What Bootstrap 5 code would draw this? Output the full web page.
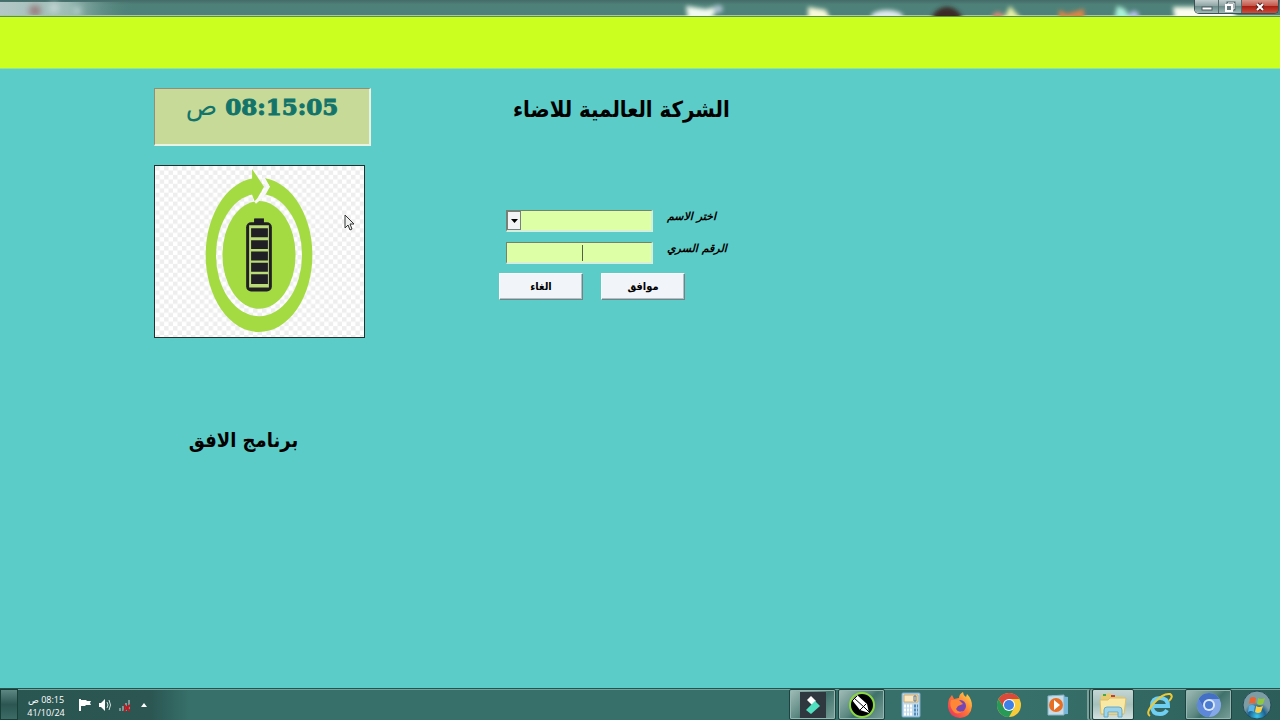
<!DOCTYPE html>
<html lang="ar" dir="ltr">
<head>
<meta charset="utf-8">
<meta name="viewport" content="width=device-width, initial-scale=1">
<title>برنامج الافق</title>
<link href="https://cdn.jsdelivr.net/npm/bootstrap@5.3.0/dist/css/bootstrap.min.css" rel="stylesheet">
<script src="https://cdn.jsdelivr.net/npm/bootstrap@5.3.0/dist/js/bootstrap.bundle.min.js"></script>
<style>
body{background:#5bccc8;font-family:"DejaVu Sans","Liberation Sans",sans-serif;color:#000}
.title-strip{height:17px;background:linear-gradient(#456a68,#4e8279 30%,#4e8079);border-bottom:1px solid #5b8f4c;box-shadow:inset 0 -1px #a9c7a0;overflow:hidden}
.win-controls{height:14px;width:85px;top:0;right:1px;border:1px solid #3c4f52;border-top:0;border-radius:0 0 5px 5px;overflow:hidden}
.win-controls button{width:23px;border:0;padding:0;background:linear-gradient(#c3cfcf,#8fa5a5 45%,#6d8c8a 50%,#9eb9b5);line-height:0}
.win-controls button+button{border-left:1px solid #54696a}
.win-controls .win-x{background:linear-gradient(#d9958a,#c4564a 45%,#a91f14 50%,#cf4d3c)}
.band{height:52px;background:#cbff1f;border-bottom:1px solid #8ee88a}
.workspace{padding:19px 16px 19px 154px;column-gap:128px}
.side{width:217px}
.clock{height:58px;background:#c7da98;border:solid;border-width:1px 2px 2px 1px;border-color:#8d907c #e9f3e4 #e9f3e4 #8d907c;color:#12746a;font-size:26px;line-height:34px}
.clock b{font-family:"DejaVu Serif","Liberation Serif",serif;font-size:23px;font-weight:700;-webkit-text-stroke:1px #12746a}
.logo-box{width:211px;height:173px;border:1px solid #23302f;margin-top:19px;background:#fff}
.pointer{left:189px;top:48px}
.product,.company,.btn-classic{font-family:"DejaVu Sans Condensed","DejaVu Sans",sans-serif}
.product{font-size:20px;line-height:28px;margin:88px 0 0;width:179px}
.company{font-size:22px;line-height:32px;margin:6px 0 0;padding-left:14px}
.login{margin-top:84px}
.field-line{padding-left:7px;column-gap:14px;height:22px;margin-bottom:10px}
.field{width:147px;height:22px;background:#ddffa6;border:solid;border-width:1px 2px 2px 1px;border-color:#76826d #d4f0dc #d4f0dc #76826d;border-radius:0;padding:0;outline:0;font-size:12px}
.combo select{appearance:none;padding-left:18px}
.combo .drop{left:1px;top:1px;width:14px;height:19px;background:#f1f3f5;border:1px solid #777f81;pointer-events:none}
.field-line label{font-size:11px;line-height:16px;font-weight:700;font-style:italic;margin-bottom:8px}
.caret{left:76px;top:3px;width:1px;height:16px;background:#536142}
.actions{column-gap:18px;margin-top:-1px}
.btn-classic{width:84px;height:27px;padding:0;background:#f1f5fa;border:1px solid;border-color:#fff #6d8586 #6d8586 #fff;border-radius:0;box-shadow:inset -1px -1px #b3bfc4;font-size:11px;font-weight:700;line-height:20px;color:#000}
.btn-classic:hover{background:#fff}
.taskbar{height:32px;background:linear-gradient(90deg,#2a5652,#2b5652 150px,#37706a 190px,#37706a 80%,#2c5d59);border-top:1px solid #27514d;box-shadow:inset 0 1px #6fa69f}
.peek{width:18px;border:1px solid #183e3a;background:linear-gradient(#5c8782,#2b5652 50%,#3d6b66)}
.tray-time{width:56px;color:#fff;font:9px/13px "Open Sans","DejaVu Sans",sans-serif}
.tray-icons{column-gap:6px}
.tray-icons button,.task{border:0;background:none;padding:0;line-height:0}
.task{width:47px}
.task.open{border:1px solid #1d423f;border-radius:2px;background:linear-gradient(135deg,#a2bdb8,#5b8781 45%,#40716b 55%,#7ba09a);box-shadow:inset 0 0 0 1px #94b7b1}
.task.lit{width:42px;margin-left:9px;background:linear-gradient(#c5d6d3,#a6c0bc 50%,#d4e1df);box-shadow:-2px 0 #7ba09a,-3px 0 #1d423f,-5px 0 #7ba09a}
.apps{column-gap:2px}
.start{width:46px}
</style>
</head>
<body class="d-flex flex-column min-vh-100">
<header>
  <div class="title-strip position-relative d-flex justify-content-between">
    <svg width="140" height="15" aria-hidden="true"><defs><filter id="soft" x="-30%" y="-80%" width="160%" height="260%"><feGaussianBlur stdDeviation="3"/></filter><linearGradient id="haze"><stop offset="0" stop-color="#b3c8c6"/><stop offset=".5" stop-color="#9dbcb6"/><stop offset="1" stop-color="#4e8079" stop-opacity="0"/></linearGradient></defs><path fill="url(#haze)" d="M0 2h135v13H0z"/><g filter="url(#soft)"><circle cx="35" cy="11" r="6" fill="#987d7e"/><circle cx="54" cy="8" r="5" fill="#c5d7d4"/><circle cx="77" cy="11" r="4" fill="#bcd4cf"/></g></svg>
    <svg width="620" height="16" aria-hidden="true"><defs><filter id="soft2" x="-10%" y="-50%" width="120%" height="200%"><feGaussianBlur stdDeviation="2"/></filter></defs><g filter="url(#soft2)"><path fill="#f1faf0" d="M26 6l20 3 12-3-2 6-6 8H28z"/><ellipse cx="58" cy="9" rx="5" ry="4" fill="#a9c0cc"/><path fill="#f8fada" d="M148 7l18 3 5 11h-23z"/><ellipse cx="227" cy="17" rx="16" ry="7" fill="#e0ebef"/><circle cx="287" cy="23" r="16" fill="#3a2925"/><path fill="#e6f0a7" d="M350 6l14 16h-22z"/><circle cx="338" cy="18" r="6" fill="#d38c79"/><path fill="#dc8646" d="M399 19V10l8 4 17-5v12z"/><path fill="#abf0d9" d="M457 6l8 3 7 12h-18z"/><circle cx="474" cy="16" r="5" fill="#b7c4ec"/><path fill="#fbfdf0" d="M513 7h62v14h-60z"/></g></svg>
    <div class="win-controls position-absolute d-flex" role="group">
      <button type="button" aria-label="تصغير"><svg width="14" height="12"><rect x="2" y="6" width="10" height="3" fill="#fff" stroke="#4c5c60"/></svg></button>
      <button type="button" aria-label="استعادة"><svg width="14" height="12"><path d="M5 2h6v6H5z" fill="none" stroke="#52666a" stroke-width="3"/><path d="M5 2h6v6H5z" fill="none" stroke="#fff"/><rect x="3" y="4" width="6" height="6" fill="#647a7d" stroke="#fff" stroke-width="2"/></svg></button>
      <button type="button" class="win-x flex-grow-1" aria-label="اغلاق"><svg width="14" height="12"><path d="M4 3l6 6M10 3l-6 6" stroke="#5c2521" stroke-width="4"/><path d="M4 3l6 6M10 3l-6 6" stroke="#fff" stroke-width="2"/></svg></button>
    </div>
  </div>
  <div class="band"></div>
</header>

<main class="workspace d-flex flex-grow-1 align-items-start">
  <section class="side flex-shrink-0">
    <div class="clock text-center" dir="rtl"><b>08:15:05</b> ص</div>
    <div class="logo-box position-relative">
      <svg class="d-block w-100 h-100" viewBox="0 0 211 173" role="img" aria-label="بطارية">
        <defs>
          <pattern id="check" width="9" height="9" patternUnits="userSpaceOnUse"><path fill="#fff" d="M0 0h9v9H0z"/><path fill="#eeeeef" d="M0 0h4.500v4.500H0zM4.500 4.500H9V9H4.500z"/></pattern>
          <mask id="ring"><rect width="211" height="173" fill="#fff"/><ellipse cx="105" cy="90" rx="43.500" ry="62" fill="#000"/><path d="M103 8l8 4 5 9-5 9-10 8z" fill="#000"/></mask>
        </defs>
        <rect width="211" height="173" fill="url(#check)"/>
        <ellipse cx="105" cy="90" rx="54" ry="78" fill="#a4db43" mask="url(#ring)"/>
        <path fill="#a4db43" d="M98 3l12 18-9 16-3-8z"/>
        <ellipse cx="105" cy="90" rx="37" ry="54.500" fill="#a4db43"/>
        <path d="M109 12l5 9-6 10-7 6" fill="none" stroke="#f8f8f8" stroke-width="3"/>
        <path fill="#201f24" d="M100 53h10v5h-10z"/><rect x="92" y="57" width="26" height="70" rx="5" fill="#201f24"/>
        <path fill="#b9dc77" d="M95 60h20v63H95z"/>
        <path fill="#201f24" d="M97 63h17v9H97zM97 75h17v9H97zM97 86.500h17v9H97zM97 98h17v9H97zM97 109.500h17v10H97z"/>
      </svg>
      <svg class="pointer position-absolute" width="11" height="18" aria-hidden="true"><path d="M1 1v13l3-3 2 5 2-1-2-5h4z" fill="#eef0f0" stroke="#333"/></svg>
    </div>
    <h2 class="product fw-bold text-center" dir="rtl">برنامج الافق</h2>
  </section>

  <section>
    <h1 class="company fw-bold text-nowrap" dir="rtl">الشركة العالمية للاضاء</h1>
    <form class="login">
      <div class="field-line d-flex align-items-center">
        <div class="combo position-relative d-flex"><select id="user" class="field"><option></option></select><span class="drop position-absolute d-flex align-items-center justify-content-center"><svg width="7" height="4" aria-hidden="true"><path d="M0 0h7L3.500 4z"/></svg></span></div>
        <label for="user" dir="rtl">اختر الاسم</label>
      </div>
      <div class="field-line d-flex align-items-center">
        <div class="position-relative d-flex"><input id="pass" type="password" class="field text-center"><span class="caret position-absolute"></span></div>
        <label for="pass" dir="rtl">الرقم السري</label>
      </div>
      <div class="actions d-flex">
        <button type="button" class="btn btn-classic">الغاء</button>
        <button type="submit" class="btn btn-classic">موافق</button>
      </div>
    </form>
  </section>
</main>

<footer class="taskbar d-flex justify-content-between">
  <div class="d-flex">
    <div class="peek"></div>
    <div class="tray-time text-center pt-1" dir="rtl"><div>08:15 ص</div><div dir="ltr">41/10/24</div></div>
    <div class="tray-icons d-flex align-items-center ms-1">
      <button type="button" aria-label="الاشعارات"><svg width="14" height="14"><path d="M2 1v12" stroke="#fff" stroke-width="2"/><path d="M3 2h5l1 1h4l-1 2 1 2H8L7 8H3z" fill="#fff"/></svg></button>
      <button type="button" aria-label="الصوت"><svg width="14" height="14"><path d="M1 5h2l4-4v12L3 9H1z" fill="#fff"/><path d="M9 4q2 3 0 6M11 2q3 5 0 10" fill="none" stroke="#d5e3e1"/></svg></button>
      <button type="button" aria-label="الشبكة"><svg width="14" height="14"><path d="M2 13v-3M5 13V8M8 13V5M11 13V2" stroke="#7e9a98" stroke-width="2"/><path d="M6 7l6 6M12 7l-6 6" stroke="#c8141c" stroke-width="2"/></svg></button>
      <button type="button" aria-label="المزيد"><svg width="12" height="14"><path d="M3 9l3-4 3 4z" fill="#fff"/></svg></button>
    </div>
  </div>
  <nav class="apps d-flex align-items-stretch">
    <button type="button" class="task open" aria-label="Filmora"><svg width="26" height="26"><path fill="#30383f" d="M0 0h26v26H0z"/><path fill="#fff" d="M11 4l5 5-4 4-5-5z"/><path fill="#50dfbf" d="M15 9l5 5-9 8-5-4z"/></svg></button>
    <button type="button" class="task open" aria-label="CorelDRAW"><svg width="28" height="28"><circle cx="14" cy="14" r="12" fill="#000" stroke="#8bd83f" stroke-width="2"/><path fill="#fff" d="M4 9l5-5 10 9 2 9-9-3z"/><path d="M6 7l11 10M9 5L4 10M12 19l6-6M17 17l5 5" stroke="#000" fill="none"/></svg></button>
    <button type="button" class="task" aria-label="الحاسبة"><svg width="20" height="26"><rect x="1" y="1" width="18" height="24" rx="1" fill="#bcd9ed" stroke="#79a9ca"/><path fill="#f8e9c4" stroke="#d9aa62" d="M3 3h14v7H3z"/><path d="M13 4h2v5h-2z" fill="none" stroke="#5f7890"/><path d="M3 14h8M3 18h8M3 22h8" stroke="#fff" stroke-width="3" stroke-dasharray="2 1"/><path d="M13 14h4M13 18h4M13 22h4" stroke="#5289b7" stroke-width="3" stroke-dasharray="2 1"/></svg></button>
    <button type="button" class="task" aria-label="Firefox"><svg width="26" height="28"><defs><linearGradient id="fox" x1="1" x2="0" y2="1"><stop stop-color="#ffe34a"/><stop offset=".5" stop-color="#ff7337"/><stop offset="1" stop-color="#e32768"/></linearGradient></defs><path fill="url(#fox)" d="M2 8l3-4 2 4 5-1q0-4 4-6 0 3 3 5l1-3q5 5 5 12-1 11-12 12Q2 26 1 16q0-5 1-8z"/><circle cx="13" cy="15" r="6" fill="#7746b5"/><path fill="#ff8735" d="M4 9h8l4 4-5 2-2 3q2 4 7 2-6 5-10 0-4-5-2-11z"/></svg></button>
    <button type="button" class="task" aria-label="Chrome"><svg width="26" height="26"><circle cx="13" cy="13" r="12" fill="#f7cb3a"/><path fill="#db493b" d="M2.600 7A12 12 0 0 1 23.400 7H13L8 16z"/><path fill="#279a58" d="M2.600 7A12 12 0 0 0 13 25l5-9H8z"/><circle cx="13" cy="13" r="6" fill="#fff"/><circle cx="13" cy="13" r="5" fill="#3e80e7"/></svg></button>
    <button type="button" class="task" aria-label="مشغل الوسائط"><svg width="22" height="22"><path fill="#75b8dc" d="M5 1l16 2v17l-16 1z"/><path fill="#c4dce8" stroke="#88b4ca" d="M1 2l16-1v20H1z"/><circle cx="9" cy="11" r="7" fill="#e66f25"/><path d="M7 6l6 5-6 5z" fill="#fff"/></svg></button>
    <button type="button" class="task open lit" aria-label="الملفات"><svg width="28" height="26"><path fill="#e7cb72" d="M2 3l9-2 3 3 11 1v18H2z"/><path fill="#f8e8a5" stroke="#dabe69" d="M1 8h8l2-2h16l-2 16H2z"/><path d="M4 3h3" stroke="#46a846" stroke-width="2"/><path d="M12 4h4" stroke="#cb3c32" stroke-width="2"/><path d="M5 25v-7q0-3 3-3h12q3 0 3 3v7h-4v-5H9v5z" fill="#9bd3ea" stroke="#69a8c6"/></svg></button>
    <button type="button" class="task" aria-label="Internet Explorer"><svg width="26" height="26"><path d="M6 14h15q0-8-8-8t-8 8 8 8q5 0 7-4" fill="none" stroke="#6fd0f2" stroke-width="4"/><path d="M3 24q-5-3 4-13T23 2q4 2-1 7" fill="none" stroke="#edc936" stroke-width="2"/></svg></button>
    <button type="button" class="task open" aria-label="Chromium"><svg width="26" height="26"><circle cx="13" cy="13" r="12" fill="#85a9e8"/><path fill="#436fc5" d="M2.600 7A12 12 0 0 1 23.400 7H13L8 16z"/><path fill="#5d87d8" d="M2.600 7A12 12 0 0 0 13 25l5-9H8z"/><circle cx="13" cy="13" r="6" fill="#dce8fb"/><circle cx="13" cy="13" r="4" fill="#4c7cd0"/></svg></button>
    <button type="button" class="task start" aria-label="ابدأ"><svg width="30" height="30"><defs><radialGradient id="orb" cy=".9"><stop stop-color="#3ac6ef"/><stop offset=".6" stop-color="#1d6290"/><stop offset="1" stop-color="#7d9da5"/></radialGradient></defs><circle cx="15" cy="15" r="14" fill="url(#orb)" stroke="#244c58"/><path fill="#ec6332" d="M8 8q3-2 6 0l-1 6q-3-2-6 0z"/><path fill="#8fc73e" d="M16 8q3 2 7 0l-2 6q-3 2-6 0z"/><path fill="#58b3e8" d="M7 16q3-2 6 0l-1 6q-3-2-6 0z"/><path fill="#fbd046" d="M14 16q3 2 7 0l-2 6q-3 2-6 0z"/></svg></button>
  </nav>
</footer>
</body>
</html>
